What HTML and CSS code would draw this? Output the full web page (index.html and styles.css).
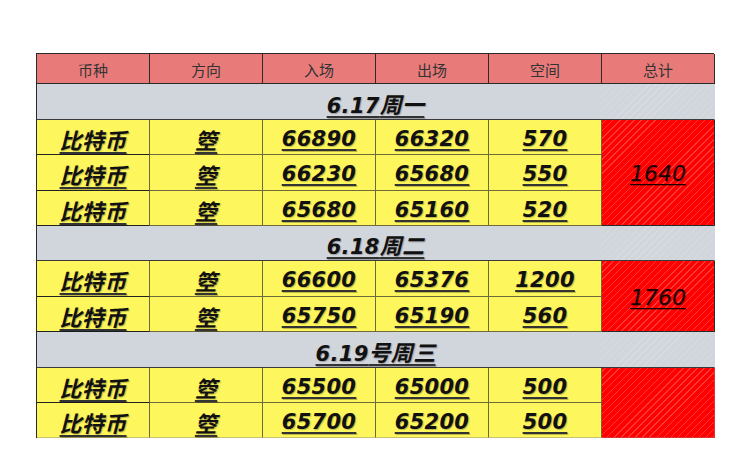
FILE: index.html
```html
<!DOCTYPE html>
<html lang="zh">
<head>
<meta charset="utf-8">
<link rel="stylesheet" href="styles.css">
</head>
<body>
<div class="sheet">
  <div class="hd">币种</div><div class="hd">方向</div><div class="hd">入场</div><div class="hd">出场</div><div class="hd">空间</div><div class="hd">总计</div>

  <div class="day"><span class="v">6.17<span class="cn">周一</span></span></div>
  <div class="c first"><span class="v cn">比特币</span></div><div class="c"><span class="v cn">箜</span></div><div class="c"><span class="v">66890</span></div><div class="c"><span class="v">66320</span></div><div class="c"><span class="v">570</span></div>
  <div class="tot span3"><span class="t">1640</span></div>
  <div class="c first"><span class="v cn">比特币</span></div><div class="c"><span class="v cn">箜</span></div><div class="c"><span class="v">66230</span></div><div class="c"><span class="v">65680</span></div><div class="c"><span class="v">550</span></div>
  <div class="c first"><span class="v cn">比特币</span></div><div class="c"><span class="v cn">箜</span></div><div class="c"><span class="v">65680</span></div><div class="c"><span class="v">65160</span></div><div class="c"><span class="v">520</span></div>

  <div class="day"><span class="v">6.18<span class="cn">周二</span></span></div>
  <div class="c first"><span class="v cn">比特币</span></div><div class="c"><span class="v cn">箜</span></div><div class="c"><span class="v">66600</span></div><div class="c"><span class="v">65376</span></div><div class="c"><span class="v">1200</span></div>
  <div class="tot span2"><span class="t">1760</span></div>
  <div class="c first"><span class="v cn">比特币</span></div><div class="c"><span class="v cn">箜</span></div><div class="c"><span class="v">65750</span></div><div class="c"><span class="v">65190</span></div><div class="c"><span class="v">560</span></div>

  <div class="day"><span class="v">6.19<span class="cn">号周三</span></span></div>
  <div class="c first"><span class="v cn">比特币</span></div><div class="c"><span class="v cn">箜</span></div><div class="c"><span class="v">65500</span></div><div class="c"><span class="v">65000</span></div><div class="c"><span class="v">500</span></div>
  <div class="tot span2 last"></div>
  <div class="c first lastrow"><span class="v cn">比特币</span></div><div class="c lastrow"><span class="v cn">箜</span></div><div class="c lastrow"><span class="v">65700</span></div><div class="c lastrow"><span class="v">65200</span></div><div class="c lastrow"><span class="v">500</span></div>
</div>
</body>
</html>
```
FILE: styles.css
```css
html, body {
  margin: 0;
  background: #ffffff;
}
body {
  padding: 53px 0 0 36px;
}
.sheet {
  display: grid;
  grid-template-columns: repeat(6, 113px);
  grid-template-rows: 30px 36px 35px 36px 35px 35px 36px 35px 36px 35px 35px;
  width: 678px;
  border-top: 1px solid #2a2a2a;
  border-left: 1px solid #2a2a2a;
  box-sizing: border-box;
  font-family: "DejaVu Sans", "Noto Sans CJK SC", sans-serif;
}
.sheet > div {
  box-sizing: border-box;
  display: flex;
  align-items: center;
  justify-content: center;
  min-width: 0;
}
.hd {
  background: #e87b7a;
  border-right: 1px solid #2a2a2a;
  border-bottom: 1px solid #2a2a2a;
  font-family: "Noto Sans CJK SC", sans-serif;
  font-size: 15px;
  color: #333;
  padding-top: 1px;
}
.day {
  grid-column: 1 / 7;
  background:
    repeating-linear-gradient(-45deg, rgba(255,255,255,0.16) 0 1px, transparent 1px 5px) right top / 113px 100% no-repeat,
    #d1d5dc;
  border-bottom: 1px solid #3a3a3a;
  border-right: 1px solid #d1d5dc;
  padding-top: 2px;
}
.c {
  background: #fdf65c;
  border-right: 1px solid #6e6a3a;
  border-bottom: 1px solid #6e6a3a;
  padding-top: 3px;
}
.c.first {
  border-bottom-color: #222;
}
.c.lastrow {
  border-bottom: 1px solid #c8c26a;
}
.v {
  font-weight: bold;
  font-style: italic;
  font-size: 21px;
  color: #111;
  text-decoration: underline;
  text-decoration-thickness: 2px;
  text-underline-offset: 3px;
  text-decoration-color: #333;
  text-shadow: 1px 1px 1px rgba(0,0,0,0.25);
  letter-spacing: 0.3px;
}
.cn {
  font-family: "Noto Sans CJK SC", sans-serif;
  font-size: 22px;
}
.v .cn {
  font-size: 22px;
}
.tot {
  grid-column: 6;
  background:
    repeating-linear-gradient(-45deg, rgba(255,110,110,0.5) 0 1px, transparent 1px 5px),
    #ff0000;
  border-right: 1px solid #2a2a2a;
  border-bottom: 1px solid #2a2a2a;
}
.span3 { grid-row: span 3; }
.span2 { grid-row: span 2; }
.tot.last {
  border-bottom: 1px solid #e03030;
  border-right: 1px solid #e03030;
}
.t {
  font-style: italic;
  font-size: 22px;
  color: #1a0000;
  text-decoration: underline;
  text-decoration-thickness: 1px;
  text-underline-offset: 3px;
  text-shadow: 1px 1px 1px rgba(0,0,0,0.3);
  padding-top: 2px;
}
```
